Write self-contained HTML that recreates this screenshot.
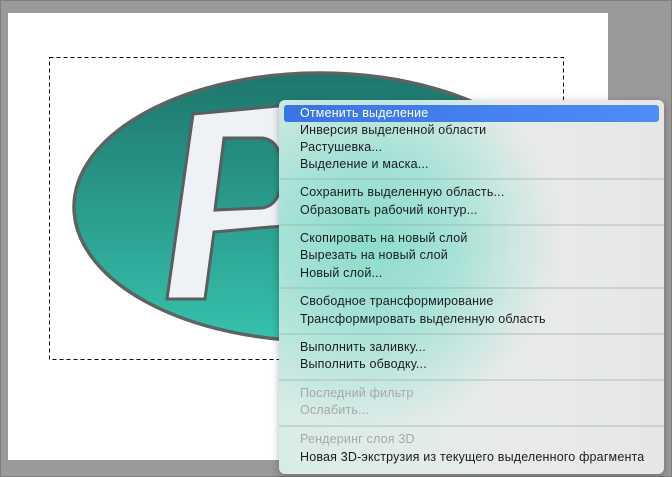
<!DOCTYPE html>
<html><head><style>
body{margin:0;width:672px;height:477px;background:#9a9a9a;position:relative;overflow:hidden;font-family:"Liberation Sans",sans-serif}
.frame{position:absolute;left:0;top:0;width:670px;height:475px;border:1px solid #7d7d7d;}
.canvas{position:absolute;left:8px;top:13px;width:600px;height:447px;background:#fff}
svg{position:absolute;left:0;top:0}
.menu{position:absolute;left:279px;top:100px;width:385px;height:374px;border-radius:6px;
background:radial-gradient(ellipse 190px 190px at 90px 140px,rgba(140,220,205,1) 0%,rgba(160,225,212,.9) 45%,rgba(235,238,237,0) 100%),linear-gradient(90deg,#d8ece7 0%,#e9ebea 60%,#e6e6e6 100%);
box-shadow:0 2px 8px rgba(0,0,0,.3);overflow:hidden}
.it{position:absolute;left:0;right:0;height:17px;line-height:17px;padding-left:21px;font-size:12.5px;color:#1c1c1c;letter-spacing:.18px}
.hl{background:linear-gradient(90deg,#3b74e2,#4d8df5);color:#fff;left:5px;right:5px;padding-left:16px;border-radius:3px}
.dis{color:#a8a8a8}
.sep{position:absolute;left:0;right:0;height:2px;background:rgba(150,175,170,.35)}
</style></head><body>
<div class="frame"></div>
<div class="canvas"></div>
<svg width="672" height="477">
<defs><linearGradient id="g" x1="0" y1="0" x2="0" y2="1"><stop offset="0" stop-color="#1e766c"/><stop offset="1" stop-color="#36c2ac"/></linearGradient></defs>
<rect x="49.5" y="57.5" width="514" height="302" fill="none" stroke="#000" stroke-dasharray="4,3"/>
<ellipse cx="320" cy="207" rx="246" ry="134" fill="url(#g)" stroke="#5d6262" stroke-width="3.5"/>
<path d="M193,114 L300,104 L300,222 Q290,226 270,227 L214,232 L205,299 L167,299 Z M224,138 L215,210 L262,208 Q282,205 282,172 Q282,140 262,138 Z" fill="#eef1f5" fill-rule="evenodd" stroke="#5a5e60" stroke-width="3"/>
</svg>
<div class="menu">
<div class="it hl" style="top:5px">Отменить выделение</div>
<div class="it" style="top:22px">Инверсия выделенной области</div>
<div class="it" style="top:39px">Растушевка...</div>
<div class="it" style="top:56px">Выделение и маска...</div>
<div class="sep" style="top:78px"></div>
<div class="it" style="top:84px">Сохранить выделенную область...</div>
<div class="it" style="top:102px">Образовать рабочий контур...</div>
<div class="sep" style="top:124px"></div>
<div class="it" style="top:130px">Скопировать на новый слой</div>
<div class="it" style="top:147px">Вырезать на новый слой</div>
<div class="it" style="top:165px">Новый слой...</div>
<div class="sep" style="top:187px"></div>
<div class="it" style="top:193px">Свободное трансформирование</div>
<div class="it" style="top:211px">Трансформировать выделенную область</div>
<div class="sep" style="top:233px"></div>
<div class="it" style="top:239px">Выполнить заливку...</div>
<div class="it" style="top:256px">Выполнить обводку...</div>
<div class="sep" style="top:279px"></div>
<div class="it dis" style="top:285px">Последний фильтр</div>
<div class="it dis" style="top:302px">Ослабить...</div>
<div class="sep" style="top:325px"></div>
<div class="it dis" style="top:331px">Рендеринг слоя 3D</div>
<div class="it" style="top:349px">Новая 3D-экструзия из текущего выделенного фрагмента</div>
</div>
</body></html>
